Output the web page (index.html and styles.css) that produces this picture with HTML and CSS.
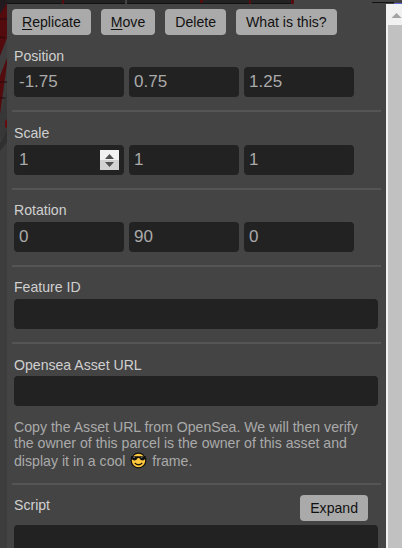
FILE: index.html
```
<!DOCTYPE html>
<html lang="en">
<head>
<meta charset="utf-8">
<title>Feature editor</title>
<link rel="stylesheet" href="styles.css">
</head>
<body>
<svg class="scene" width="402" height="548" viewBox="0 0 402 548" aria-hidden="true">
  <rect width="402" height="548" fill="#3d3d3d"/>
  <path d="M0 0H7V63L0 115Z" fill="#540b0e"/>
  <path d="M0 0H7V3L0 14Z" fill="#211b20"/>
  <path d="M7 38L0 56V76L7 58Z" fill="#3f3d3e"/>
  <path d="M0 19H7M0 37L5 38M0 82H7M0 98H6" stroke="#24090b"/>
  <path d="M0 115L7 92V130L0 140Z" fill="#373737"/>
  <path d="M5 121L7 119V128L5 127Z" fill="#650b0d"/>
  <path d="M0 143L7 130V142L0 151Z" fill="#303030"/>
  <path d="M7 0H294V3H7Z" fill="#222"/>
  <path d="M7 3H294V4H7Z" fill="#111"/>
  <path d="M62 0h2v4h-2zM200 0h3v3h-3zM249 0h2v4h-2zM291 0h3v4h-3z" fill="#560d10"/>
  <path d="M125 0h2v4h-2z" fill="#444"/>
  <path d="M294 0H402V4H294Z" fill="#444"/>
  <path d="M372 2H394V3H372Z" fill="#111"/>
  <path d="M394 3H402V4H394Z" fill="#6568d8"/>
</svg>
<div class="window">
  <main class="panel">
    <div class="toolbar">
      <button class="btn"><u>R</u>eplicate</button>
      <button class="btn"><u>M</u>ove</button>
      <button class="btn">Delete</button>
      <button class="btn">What is this?</button>
    </div>
    <section class="group">
      <div class="label">Position</div>
      <div class="row"><div class="field">-1.75</div><div class="field">0.75</div><div class="field">1.25</div></div>
    </section>
    <section class="group scale">
      <div class="label">Scale</div>
      <div class="row">
        <div class="field">1
          <svg class="spinner" width="19" height="20" viewBox="0 0 19 20"><path fill="#f1f1f1" d="M0 0h19v10H0z"/><path fill="#d2d2d2" d="M0 10h19v10H0z"/><path fill="#505050" d="M5 9L9.500 4L14 9ZM5 12H14L9.500 17Z"/></svg>
        </div>
        <div class="field">1</div><div class="field">1</div>
      </div>
    </section>
    <section class="group raised">
      <div class="label">Rotation</div>
      <div class="row"><div class="field">0</div><div class="field">90</div><div class="field">0</div></div>
    </section>
    <section class="group raised">
      <div class="label">Feature ID</div>
      <div class="field wide"></div>
    </section>
    <section class="group asset">
      <div class="label">Opensea Asset URL</div>
      <div class="field wide"></div>
      <p class="help">Copy the Asset URL from OpenSea. We will then verify<br>the owner of this parcel is the owner of this asset and<br><span class="last">display it in a cool <svg class="emoji" role="img" aria-label="smiling face with sunglasses" width="17" height="17" viewBox="0 0 17 17"><circle cx="8.500" cy="8.500" r="7.300" fill="#ffc83d" stroke="#111" stroke-width="1.200"/><path d="M1 4.200H16L15.300 6C15 9.200 10.200 9.300 9.400 6H7.600C6.800 9.300 2 9.200 1.700 6Z" fill="#111"/><path d="M3.400 5.500L5 5.200M10.900 5.500L12.500 5.200" stroke="#999" stroke-width=".8"/><path d="M4.700 11Q8.500 14.500 12.300 11" fill="none" stroke="#221b0d" stroke-width="1.200"/></svg> frame.</span></p>
    </section>
    <section class="script">
      <div class="script-head"><div class="label">Script</div><button class="btn">Expand</button></div>
      <div class="field code"></div>
    </section>
  </main>
  <div class="scrollbar"><svg width="16" height="21" viewBox="0 0 16 21"><path d="M5.500 14L10.500 9L15.500 14Z" fill="#a3a3a3"/></svg><div class="thumb"></div></div>
</div>
</body>
</html>
```
FILE: styles.css
```
* { box-sizing: border-box; }
body {
  margin: 0;
  height: 548px;
  overflow: hidden;
  font: 14.1px/16px "Liberation Sans", Arial, sans-serif;
  color: #d0d0d0;
}
.scene { position: absolute; top: 0; left: 0; z-index: -1; }
.window { display: flex; height: 548px; padding: 4px 0 0 7px; }
.panel { width: 379px; padding: 5px 5px 0; background: #444; overflow: hidden; }
.toolbar { display: flex; gap: 10px; }
.btn {
  height: 26px;
  padding: 0 10px;
  border: 0;
  border-radius: 4px;
  background: #aaa;
  color: #111;
  font: 14.1px/26px "Liberation Sans", Arial, sans-serif;
  white-space: nowrap;
}
.btn u { text-underline-offset: 2px; }
.group {
  width: 369px;
  height: 77px;
  padding: 13px 0 0 2px;
  border-bottom: 2px solid #555;
}
.label { height: 19px; }
.scale { height: 78px; }
.scale .label { height: 20px; }
.raised { padding-top: 12px; }
.raised .label { height: 20px; }
.row { display: flex; gap: 5px; }
.field {
  display: flex;
  justify-content: space-between;
  width: 110px;
  height: 30px;
  padding: 0 5px;
  border-radius: 4px;
  background: #222;
  color: #aaa;
  font-size: 17px;
  line-height: 29px;
}
.spinner { margin-top: 5px; }
.wide { width: 364px; }
.asset { height: 141px; }
.help { margin: 13px 0 0; color: #aaa; font-size: 14.14px; white-space: nowrap; }
.last { display: block; padding-top: 1px; line-height: 19px; }
.emoji { vertical-align: -3px; margin: 0 1px; }
.script { padding: 10px 0 0 2px; }
.script-head { display: flex; justify-content: space-between; width: 354px; height: 30px; }
.script-head .label { padding-top: 2px; }
.code { width: 364px; height: 60px; }
.scrollbar { width: 16px; background: #f1f1f1; }
.scrollbar svg { display: block; }
.thumb { height: 523px; margin-left: 2px; background: #c1c1c1; }
```
